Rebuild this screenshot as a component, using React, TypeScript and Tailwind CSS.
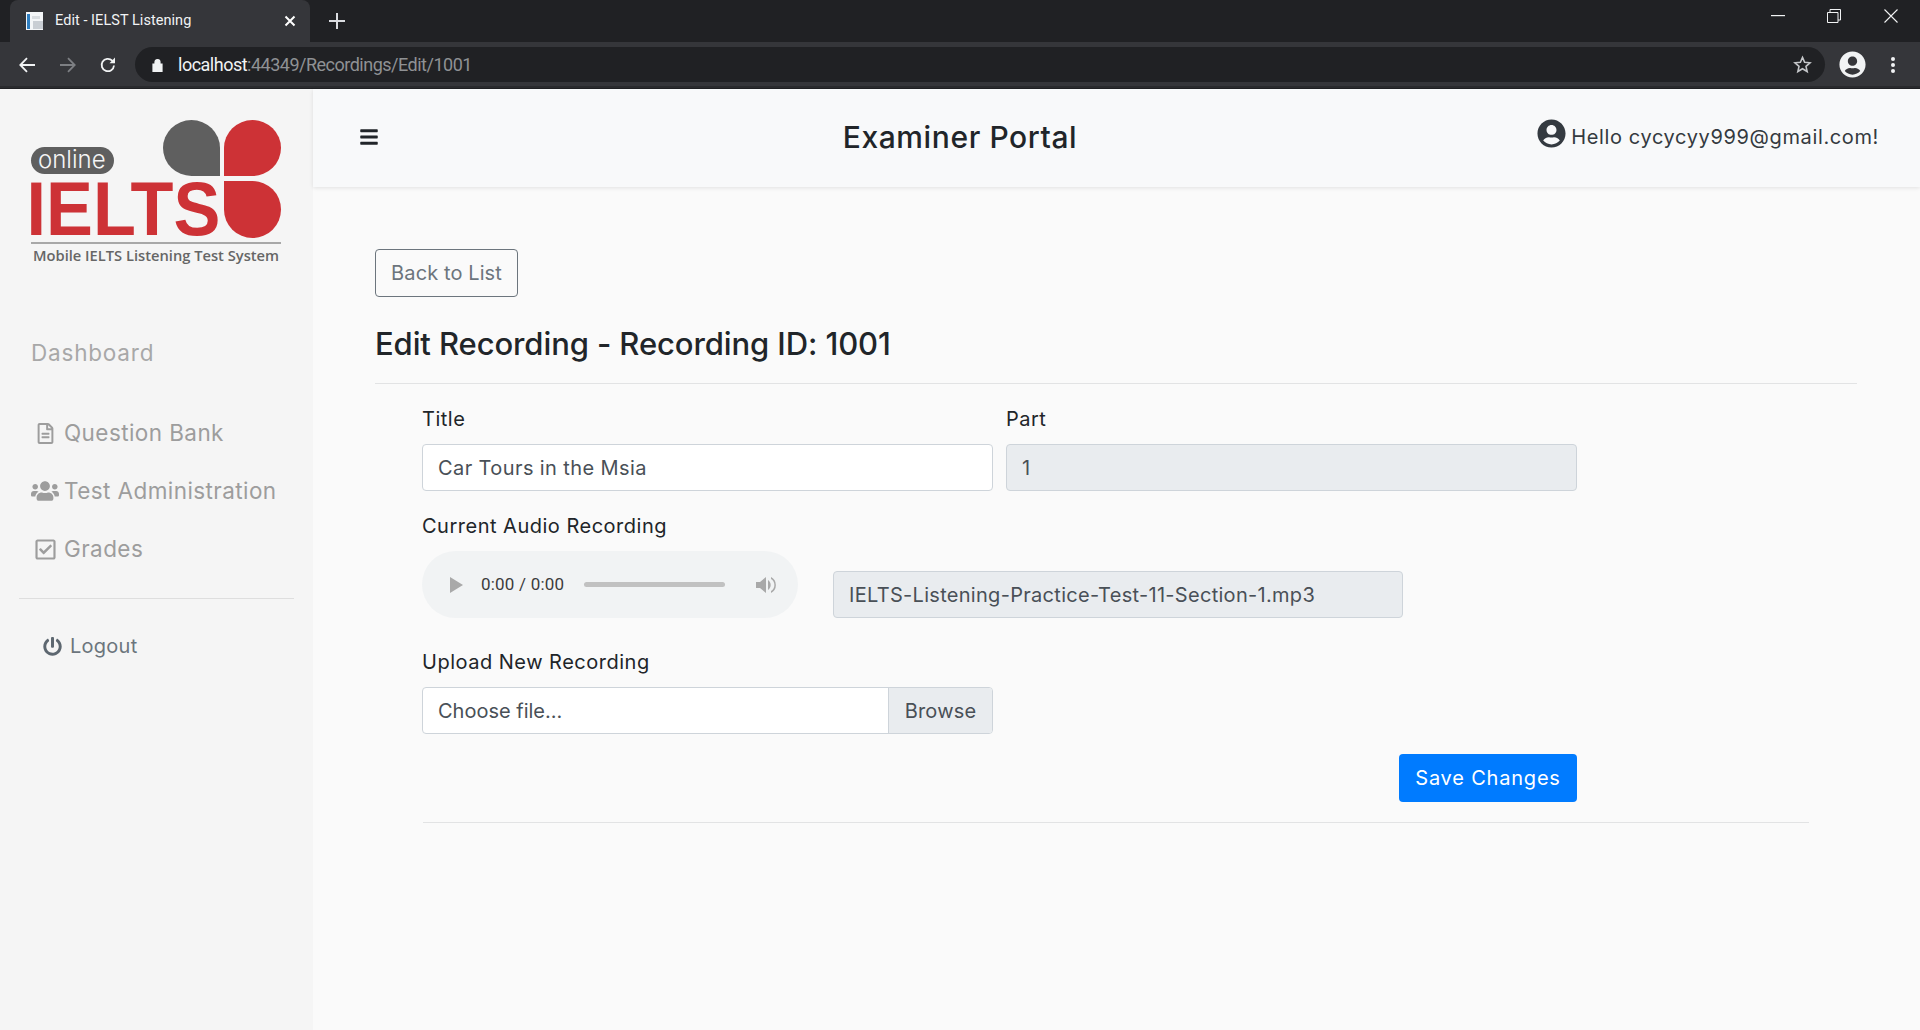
import { FaBars, FaPowerOff, FaRegCheckSquare, FaRegFileAlt, FaUserCircle, FaUsers } from "react-icons/fa";

const navItems = [
  { label: "Question Bank", icon: <FaRegFileAlt className="text-[21px]" /> },
  { label: "Test Administration", icon: <FaUsers className="text-[28px]" /> },
  { label: "Grades", icon: <FaRegCheckSquare className="text-[23px]" /> },
];

function Logo() {
  return (
    <svg width="252" height="145" viewBox="0 0 252 145">
      <path d="M190 56H161.500A28.500 28 0 1 1 190 28Z" fill="#5f5f5f" />
      <path d="M194 56V28A28.500 28 0 1 1 222.500 56Z" fill="#cd3236" />
      <path d="M194 61H222.500A28.500 28.500 0 1 1 194 89.500Z" fill="#cd3236" />
      <rect x="1" y="27" width="83" height="27" rx="13.500" fill="#5f5f5f" />
      <text x="8" y="48" fontFamily="Inter, sans-serif" fontWeight="300" fontSize="24" fill="#f5f5f5">
        online
      </text>
      <text transform="translate(-3.500 115) scale(0.925 1)" fontFamily="'Liberation Sans', sans-serif" fontWeight="700" fontSize="76" fill="#cd3236">
        IELTS
      </text>
      <rect x="1" y="122" width="250" height="2" fill="#a8a8a8" />
      <text x="3" y="141" fontFamily="'Open Sans', sans-serif" fontWeight="600" fontSize="14.700" fill="#666666">
        Mobile IELTS Listening Test System
      </text>
    </svg>
  );
}

function BrowserChrome() {
  return (
    <div className="h-[89px] shrink-0 bg-[#202124] font-['Roboto',sans-serif]">
      <div className="flex h-[42px] items-end pl-[10px]">
        <div className="flex h-[42px] w-[300px] items-center rounded-t-lg bg-[#35363a] pl-[15px] pr-[14px]">
          <svg width="20" height="20" viewBox="0 0 20 20" className="shrink-0">
            <rect x="1" y="1" width="17" height="18" fill="#f4f6f8" />
            <rect x="2" y="3" width="3" height="15" fill="#2f7fc1" />
            <rect x="7" y="5" width="8" height="3" fill="#d9dde1" />
            <rect x="8" y="10" width="10" height="8" fill="#c9ced4" />
          </svg>
          <span className="ml-[10px] text-[14.500px] tracking-[0.05px] text-[#f1f3f4]">Edit - IELST Listening</span>
          <svg width="12" height="12" viewBox="0 0 12 12" className="ml-auto" stroke="#ffffff" strokeWidth="2">
            <path d="M1.500 1.500l9 9M10.500 1.500l-9 9" />
          </svg>
        </div>
        <svg width="16" height="16" viewBox="0 0 16 16" className="mb-[13px] ml-[19px]" stroke="#dadce0" strokeWidth="2">
          <path d="M8 0v16M0 8h16" />
        </svg>
        <div className="mb-[19px] ml-auto flex items-center">
          <svg width="14" height="2" viewBox="0 0 14 2" className="mr-[42px]"><rect width="14" height="1.200" fill="#f1f3f4" /></svg>
          <svg width="14" height="14" viewBox="0 0 14 14" className="mr-[43px]" fill="none" stroke="#f1f3f4">
            <path d="M3 3V.5h10.500V11H11M.5 3.500h10.500v10H.5z" />
          </svg>
          <svg width="14" height="14" viewBox="0 0 14 14" className="mr-[22px]" stroke="#f1f3f4" strokeWidth="1.100">
            <path d="M.5.500l13 13M13.500.500l-13 13" />
          </svg>
        </div>
      </div>
      <div className="flex h-[46px] items-start border-b-2 border-b-[#2a2b2e] bg-[#35363a] pt-[5px]">
        <div className="flex h-[35px] w-[135px] shrink-0 items-center pl-[19px]">
          <svg width="16" height="16" viewBox="0 0 16 16" fill="none" stroke="#f1f3f4" strokeWidth="1.800">
            <path d="M16 8H1.500M8 1.200L1.300 8 8 14.800" />
          </svg>
          <svg width="16" height="16" viewBox="0 0 16 16" fill="none" stroke="#7d7f83" strokeWidth="1.800" className="ml-[25px]">
            <path d="M0 8h14.500M8 1.200L14.700 8 8 14.800" />
          </svg>
          <svg width="18" height="18" viewBox="0 0 18 18" fill="none" stroke="#f1f3f4" strokeWidth="1.800" className="ml-[23px]">
            <path d="M15 9.500A6.200 6.200 0 1 1 13.200 4.600L15.500 6.500" />
            <path d="M16 1.500V7.200H10.500" fill="#f1f3f4" stroke="none" />
          </svg>
        </div>
        <div className="flex h-[35px] flex-1 items-center rounded-full bg-[#202124] pl-[17px] pr-[13px]">
          <svg width="11" height="14" viewBox="0 0 11 14" fill="#f1f3f4">
            <path d="M1 6h9v8H1zM3 6V4a2.500 2.500 0 0 1 5 0v2" stroke="#f1f3f4" strokeWidth="1.200" />
          </svg>
          <span className="ml-[15px] text-[18px] tracking-[-0.5px] text-[#f1f3f4]">
            localhost<span className="text-[#8f9194]">:44349/Recordings/Edit/1001</span>
          </span>
          <svg width="19" height="19" viewBox="0 0 24 24" className="ml-auto" fill="none" stroke="#c4c6c9" strokeWidth="2">
            <path d="M12 3l2.700 6.200 6.800.6-5.100 4.500 1.500 6.600L12 17.400l-5.900 3.500 1.500-6.600-5.100-4.500 6.800-.6z" />
          </svg>
        </div>
        <div className="flex h-[35px] w-[95px] shrink-0 items-center pl-[14px]">
          <FaUserCircle className="text-[27px] text-[#f1f3f4]" />
          <svg width="6" height="18" viewBox="0 0 6 18" fill="#f1f3f4" className="ml-[24px]">
            <circle cx="3" cy="3" r="2" />
            <circle cx="3" cy="9" r="2" />
            <circle cx="3" cy="15" r="2" />
          </svg>
        </div>
      </div>
    </div>
  );
}

function Sidebar() {
  return (
    <aside className="w-[313px] shrink-0 bg-[#f5f5f5] pt-[31px]">
      <div className="pl-[30px]">
        <Logo />
      </div>
      <div className="mt-[73px] pl-[31px] text-[22.500px] leading-[30px] tracking-[0.8px] text-[#a8a8a8]">Dashboard</div>
      <nav className="mt-[50px] flex flex-col gap-[28px] pl-[31px]">
        {navItems.map((item) => (
          <a key={item.label} className="flex h-[30px] items-center text-[22.500px] tracking-[0.42px] text-[#9d9d9d]">
            <span className="flex w-[28px] justify-center">{item.icon}</span>
            <span className="ml-[5px]">{item.label}</span>
          </a>
        ))}
      </nav>
      <hr className="mx-[19px] mt-[34px] border-[#dedede]" />
      <a className="mt-[32px] flex h-[30px] items-center pl-[43px] text-[20px] tracking-[0.25px] text-[#6c757d]">
        <FaPowerOff className="text-[19px] text-[#5d6770]" />
        <span className="ml-[8px]">Logout</span>
      </a>
    </aside>
  );
}

function AudioPlayer() {
  return (
    <div className="flex h-[67px] w-[376px] shrink-0 items-center rounded-full bg-[#f1f3f4] pl-[28px] font-['Roboto',sans-serif]">
      <svg width="13" height="16" viewBox="0 0 13 16" fill="#a9a9a9">
        <path d="M0 0l13 8-13 8z" />
      </svg>
      <span className="ml-[18px] text-[17px] tracking-[0.2px] text-[#3c3c3c]">0:00 / 0:00</span>
      <div className="ml-[20px] h-[5px] w-[141px] rounded-full bg-[#c1c1c1]" />
      <svg width="20" height="20" viewBox="0 0 20 20" className="ml-[31px]" fill="#a9a9a9">
        <path d="M0 7h4l6-5v16l-6-5H0z" />
        <path d="M12 5a6 6 0 0 1 0 10zM15 2a9 9 0 0 1 0 16v-2a7 7 0 0 0 0-12z" />
      </svg>
    </div>
  );
}

export default function App() {
  const labelClass = "block h-[30px] text-[20px] leading-[30px] tracking-[0.5px] text-[#212529]";
  const inputClass = "flex h-[47px] items-center rounded border border-[#ced4da] px-[15px] text-[20px] text-[#495057]";

  return (
    <div className="flex h-[1030px] w-[1920px] flex-col overflow-hidden bg-[#fafafa] font-['Inter',sans-serif]">
      <BrowserChrome />
      <div className="flex flex-1">
        <Sidebar />
        <main className="min-w-0 flex-1">
          <header className="relative flex h-[98px] items-center bg-[#f8f9fa] pb-[2px] pl-[46px] pr-[41px] shadow-[0_1px_4px_rgba(0,0,0,0.1)]">
            <FaBars className="text-[20px] text-[#212529]" />
            <h1 className="absolute left-[647px] w-[0px] whitespace-nowrap text-center text-[30px] font-medium leading-none tracking-[0.6px] text-[#212529]">
              <span className="inline-block -translate-x-1/2">Examiner Portal</span>
            </h1>
            <div className="ml-auto flex items-center text-[20px] tracking-[0.63px] text-[#343a40]">
              <FaUserCircle className="mb-[8px] text-[29px]" />
              <span className="ml-[5px]">Hello cycycyy999@gmail.com!</span>
            </div>
          </header>

          <div className="pl-[62px] pr-[63px] pt-[62px]">
            <button className="block h-[48px] w-[143px] rounded border border-[#6c757d] text-[20px] tracking-[0.1px] text-[#6c757d]">Back to List</button>
            <h2 className="mt-[28px] h-[38px] text-[31px] font-medium leading-[38px] tracking-[-0.1px] text-[#212529]">Edit Recording - Recording ID: 1001</h2>
            <hr className="mt-[20px] border-[#e2e3e4]" />

            <div className="w-[1202px] pl-[47px] pt-[20px]">
              <div className="grid grid-cols-[571px_571px] gap-x-[13px]">
                <div>
                  <label className={labelClass}>Title</label>
                  <div className={`mt-[10px] bg-white tracking-[0.4px] ${inputClass}`}>Car Tours in the Msia</div>
                </div>
                <div>
                  <label className={labelClass}>Part</label>
                  <div className={`mt-[10px] bg-[#e9ecef] ${inputClass}`}>1</div>
                </div>
              </div>

              <label className={`mt-[20px] ${labelClass}`}>Current Audio Recording</label>
              <div className="mt-[10px] flex items-end gap-[35px]">
                <AudioPlayer />
                <div className={`w-[570px] bg-[#e9ecef] tracking-[0.3px] ${inputClass}`}>IELTS-Listening-Practice-Test-11-Section-1.mp3</div>
              </div>

              <label className={`mt-[29px] ${labelClass}`}>Upload New Recording</label>
              <div className="mt-[10px] flex h-[47px] w-[571px] overflow-hidden rounded border border-[#ced4da] bg-white text-[20px] text-[#495057]">
                <div className="flex flex-1 items-center px-[15px]">Choose file...</div>
                <div className="flex w-[104px] items-center justify-center border-l border-[#ced4da] bg-[#e9ecef] tracking-[0.2px]">Browse</div>
              </div>

              <div className="mt-[20px] flex w-[1155px] justify-end">
                <button className="h-[48px] w-[178px] rounded bg-[#007bff] text-[20px] tracking-[0.8px] text-white">Save Changes</button>
              </div>
            </div>
            <hr className="ml-[48px] mr-[48px] mt-[20px] border-[#e2e3e4]" />
          </div>
        </main>
      </div>
    </div>
  );
}
